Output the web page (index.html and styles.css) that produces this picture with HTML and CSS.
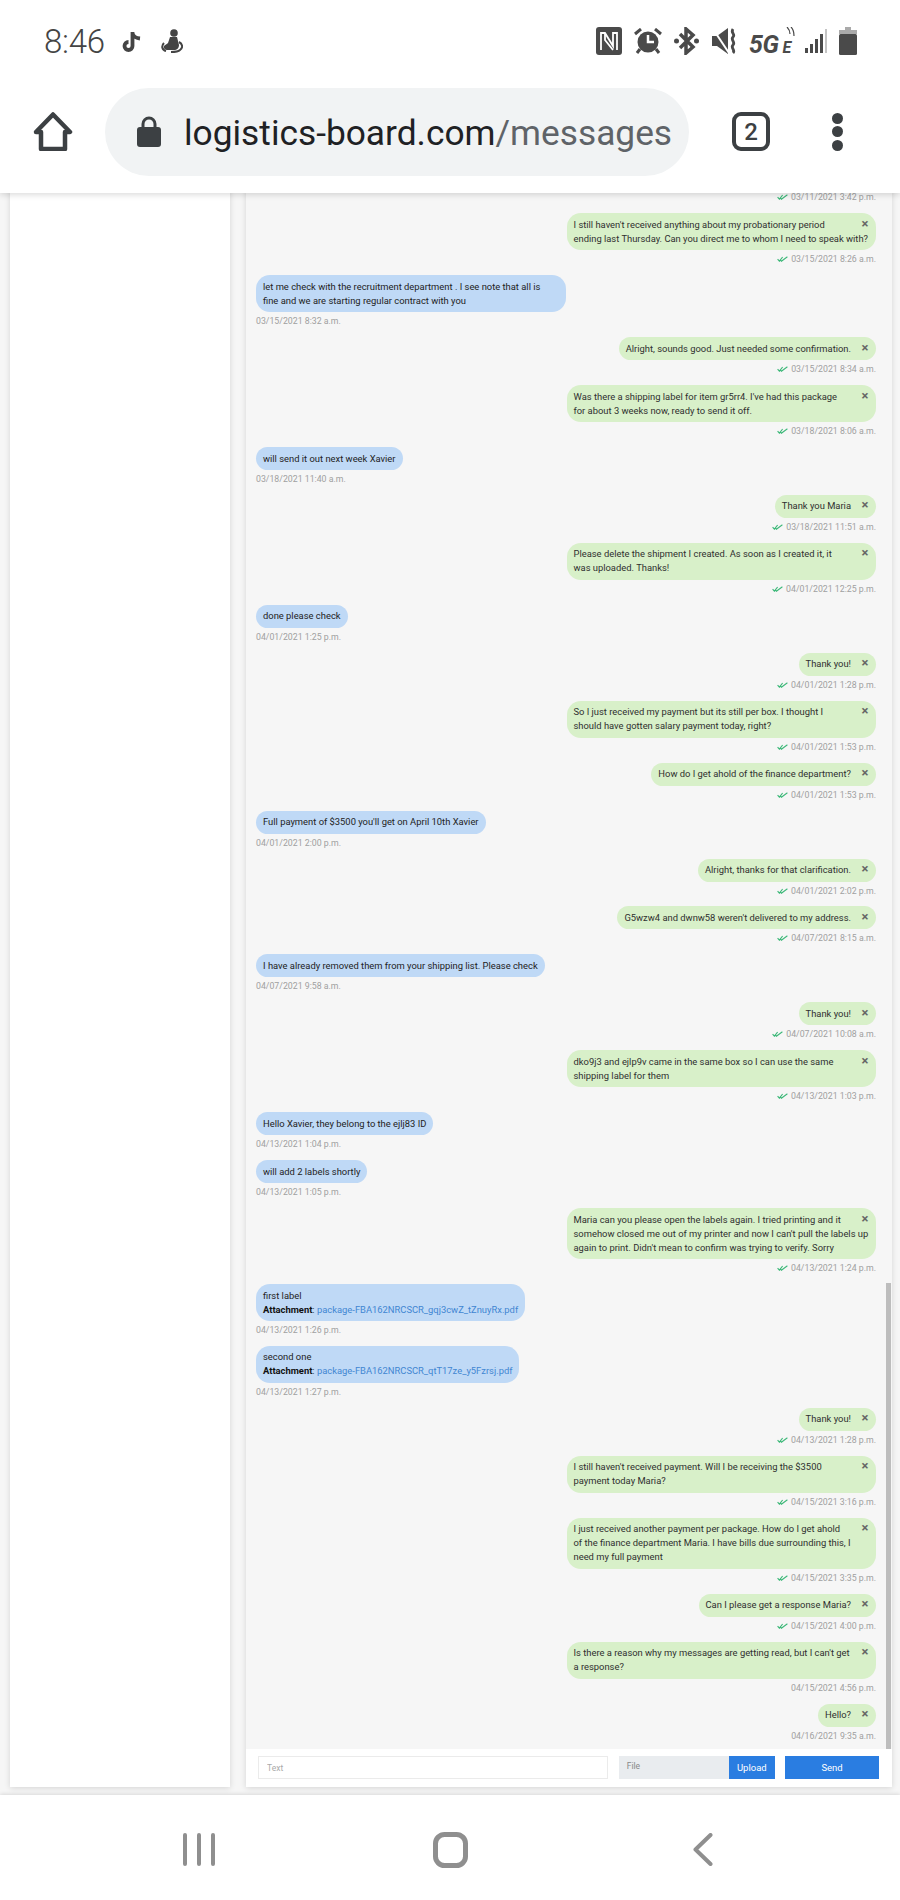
FILE: index.html
```html
<!DOCTYPE html>
<html lang="en">
<head>
<meta charset="utf-8">
<title>Messages</title>
<link rel="stylesheet" href="styles.css">
</head>
<body>
<svg class="defs" width="0" height="0"><defs>
<symbol id="chk" viewBox="0 0 11 6"><path d="M.6 3.2 2.4 5.2 5.6 1M3.6 4.4 4.4 5.2 10.4.8" fill="none" stroke="#3cb878" stroke-width="1.100"/></symbol>
</defs></svg>
<header class="top">
  <div class="status">
    <div class="status-left">
      <span class="clock">8:46</span>
      <svg class="ic-tt" viewBox="0 0 20 21"><path d="M10.500 1v14a4 4 0 1 1-4-4M10.500 2c.5 3 3 5 7.500 5.500" fill="none" stroke="#444" stroke-width="3.800"/></svg>
      <svg class="ic-fig" viewBox="0 0 22 24"><circle cx="13" cy="4" r="3.800" fill="#444"/><path d="M9 8h7l2 8c0 3-2 5-5 5H7c-3 0-5-2-4-4 1-1 3-2 4-3z" fill="#444"/><path d="M18 13c4 2 4 6 1 8-2 2-6 2-9 2M3 14C0 17 1 21 5 22" fill="none" stroke="#444" stroke-width="2"/></svg>
    </div>
    <div class="status-right">
      <svg class="ic-n" viewBox="0 0 26 28"><rect width="26" height="28" rx="3" fill="#4a4a4a"/><path d="M5 23V6h4l8 13V6h4v17M9 6v7l8 10" fill="none" stroke="#fff" stroke-width="1.800"/></svg>
      <svg class="ic-al" viewBox="0 0 28 26"><path d="M1 6 7 1M27 6 21 1" stroke="#4a4a4a" stroke-width="3"/><circle cx="14" cy="14" r="10.500" fill="#4a4a4a"/><path d="M14 7v7h6" fill="none" stroke="#fff" stroke-width="2.500"/><path d="M6 21l-3 4M22 21l3 4" stroke="#4a4a4a" stroke-width="3"/></svg>
      <svg class="ic-bt" viewBox="0 0 26 28"><path d="M6 7 19 20 12 26V2L19 8 6 21" fill="none" stroke="#4a4a4a" stroke-width="3.500"/><circle cx="2.500" cy="14" r="2.500" fill="#4a4a4a"/><circle cx="22.500" cy="14" r="2.500" fill="#4a4a4a"/></svg>
      <svg class="ic-mu" viewBox="0 0 25 26"><path d="M0 8h5l11-8v26L5 18H0z" fill="#4a4a4a"/><path d="M1 1 17 25" stroke="#fff" stroke-width="2"/><path d="M21 1c-3 4 3 5 0 8s3 5 0 8 3 5 0 8" fill="none" stroke="#4a4a4a" stroke-width="2.800"/></svg>
      <div class="net"><span class="net-5g">5G</span><span class="net-e">E</span>
        <svg class="ic-wave" viewBox="0 0 9 10"><path d="M1 0c2 2 3 4 3 7M5 0c2 2 3 5 3 9" fill="none" stroke="#4a4a4a" stroke-width="1.200"/></svg>
      </div>
      <svg class="ic-sig" viewBox="0 0 22 24"><rect x="0" y="19" width="3" height="5" fill="#4a4a4a"/><rect x="5" y="15" width="3" height="9" fill="#4a4a4a"/><rect x="10" y="10" width="3" height="14" fill="#4a4a4a"/><rect x="15" y="5" width="3" height="19" fill="#4a4a4a"/><rect x="20" y="0" width="2" height="24" fill="#c4c4c4"/></svg>
      <svg class="ic-bat" viewBox="0 0 18 28"><path d="M6 0h6v3h6v4H0V3h6z" fill="#aaa"/><rect y="7" width="18" height="21" rx="1.500" fill="#4a4a4a"/></svg>
    </div>
  </div>
  <div class="toolbar">
    <svg class="ic-home" viewBox="0 0 40 39"><path d="M20 2.500 37 20h-5v17H8V20H3z" fill="none" stroke="#3c4043" stroke-width="4.500" stroke-linejoin="round"/></svg>
    <div class="pill">
      <svg class="ic-lock" viewBox="0 0 24 31"><path d="M6 13V8a6 6 0 0 1 12 0v5" fill="none" stroke="#3c4043" stroke-width="3"/><rect y="11" width="24" height="20" rx="3" fill="#3c4043"/></svg>
      <div class="url"><span class="host">logistics-board.com</span><span class="path">/messages/</span></div>
    </div>
    <div class="tabs">2</div>
    <div class="dots"><i></i><i></i><i></i></div>
  </div>
</header>

<main class="main">
  <aside class="side"></aside>
  <section class="panel">
    <div class="list">
      <div class="msg out"><div class="ts"><svg class="chk"><use href="#chk"/></svg>03/11/2021 3:42 p.m.</div></div>

      <div class="msg out"><div class="bub multi"><span class="x">×</span>I still haven't received anything about my probationary period<br>ending last Thursday. Can you direct me to whom I need to speak with?</div><div class="ts"><svg class="chk"><use href="#chk"/></svg>03/15/2021 8:26 a.m.</div></div>
      <div class="msg in"><div class="bub multi">let me check with the recruitment department . I see note that all is<br>fine and we are starting regular contract with you</div><div class="ts">03/15/2021 8:32 a.m.</div></div>
      <div class="msg out"><div class="bub"><span class="x">×</span>Alright, sounds good. Just needed some confirmation.</div><div class="ts"><svg class="chk"><use href="#chk"/></svg>03/15/2021 8:34 a.m.</div></div>
      <div class="msg out"><div class="bub multi"><span class="x">×</span>Was there a shipping label for item gr5rr4. I've had this package<br>for about 3 weeks now, ready to send it off.</div><div class="ts"><svg class="chk"><use href="#chk"/></svg>03/18/2021 8:06 a.m.</div></div>
      <div class="msg in"><div class="bub">will send it out next week Xavier</div><div class="ts">03/18/2021 11:40 a.m.</div></div>
      <div class="msg out"><div class="bub"><span class="x">×</span>Thank you Maria</div><div class="ts"><svg class="chk"><use href="#chk"/></svg>03/18/2021 11:51 a.m.</div></div>
      <div class="msg out"><div class="bub multi"><span class="x">×</span>Please delete the shipment I created. As soon as I created it, it<br>was uploaded. Thanks!</div><div class="ts"><svg class="chk"><use href="#chk"/></svg>04/01/2021 12:25 p.m.</div></div>
      <div class="msg in"><div class="bub">done please check</div><div class="ts">04/01/2021 1:25 p.m.</div></div>
      <div class="msg out"><div class="bub"><span class="x">×</span>Thank you!</div><div class="ts"><svg class="chk"><use href="#chk"/></svg>04/01/2021 1:28 p.m.</div></div>
      <div class="msg out"><div class="bub multi"><span class="x">×</span>So I just received my payment but its still per box. I thought I<br>should have gotten salary payment today, right?</div><div class="ts"><svg class="chk"><use href="#chk"/></svg>04/01/2021 1:53 p.m.</div></div>
      <div class="msg out"><div class="bub"><span class="x">×</span>How do I get ahold of the finance department?</div><div class="ts"><svg class="chk"><use href="#chk"/></svg>04/01/2021 1:53 p.m.</div></div>
      <div class="msg in"><div class="bub">Full payment of $3500 you'll get on April 10th Xavier</div><div class="ts">04/01/2021 2:00 p.m.</div></div>
      <div class="msg out"><div class="bub"><span class="x">×</span>Alright, thanks for that clarification.</div><div class="ts"><svg class="chk"><use href="#chk"/></svg>04/01/2021 2:02 p.m.</div></div>
      <div class="msg out"><div class="bub"><span class="x">×</span>G5wzw4 and dwnw58 weren't delivered to my address.</div><div class="ts"><svg class="chk"><use href="#chk"/></svg>04/07/2021 8:15 a.m.</div></div>
      <div class="msg in"><div class="bub">I have already removed them from your shipping list. Please check</div><div class="ts">04/07/2021 9:58 a.m.</div></div>
      <div class="msg out"><div class="bub"><span class="x">×</span>Thank you!</div><div class="ts"><svg class="chk"><use href="#chk"/></svg>04/07/2021 10:08 a.m.</div></div>
      <div class="msg out"><div class="bub multi"><span class="x">×</span>dko9j3 and ejlp9v came in the same box so I can use the same<br>shipping label for them</div><div class="ts"><svg class="chk"><use href="#chk"/></svg>04/13/2021 1:03 p.m.</div></div>
      <div class="msg in"><div class="bub">Hello Xavier, they belong to the ejlj83 ID</div><div class="ts">04/13/2021 1:04 p.m.</div></div>
      <div class="msg in"><div class="bub">will add 2 labels shortly</div><div class="ts">04/13/2021 1:05 p.m.</div></div>
      <div class="msg out"><div class="bub multi"><span class="x">×</span>Maria can you please open the labels again. I tried printing and it<br>somehow closed me out of my printer and now I can't pull the labels up<br>again to print. Didn't mean to confirm was trying to verify. Sorry</div><div class="ts"><svg class="chk"><use href="#chk"/></svg>04/13/2021 1:24 p.m.</div></div>
      <div class="msg in"><div class="bub">first label<br><b>Attachment</b>: <a href="#">package-FBA162NRCSCR_gqj3cwZ_tZnuyRx.pdf</a></div><div class="ts">04/13/2021 1:26 p.m.</div></div>
      <div class="msg in"><div class="bub">second one<br><b>Attachment</b>: <a href="#">package-FBA162NRCSCR_qtT17ze_y5Fzrsj.pdf</a></div><div class="ts">04/13/2021 1:27 p.m.</div></div>
      <div class="msg out"><div class="bub"><span class="x">×</span>Thank you!</div><div class="ts"><svg class="chk"><use href="#chk"/></svg>04/13/2021 1:28 p.m.</div></div>
      <div class="msg out"><div class="bub multi"><span class="x">×</span>I still haven't received payment. Will I be receiving the $3500<br>payment today Maria?</div><div class="ts"><svg class="chk"><use href="#chk"/></svg>04/15/2021 3:16 p.m.</div></div>
      <div class="msg out"><div class="bub multi"><span class="x">×</span>I just received another payment per package. How do I get ahold<br>of the finance department Maria. I have bills due surrounding this, I<br>need my full payment</div><div class="ts"><svg class="chk"><use href="#chk"/></svg>04/15/2021 3:35 p.m.</div></div>
      <div class="msg out"><div class="bub"><span class="x">×</span>Can I please get a response Maria?</div><div class="ts"><svg class="chk"><use href="#chk"/></svg>04/15/2021 4:00 p.m.</div></div>
      <div class="msg out"><div class="bub multi"><span class="x">×</span>Is there a reason why my messages are getting read, but I can't get<br>a response?</div><div class="ts">04/15/2021 4:56 p.m.</div></div>
      <div class="msg out"><div class="bub"><span class="x">×</span>Hello?</div><div class="ts">04/16/2021 9:35 a.m.</div></div>
      <div class="scroll-thumb"></div>
    </div>
    <form class="composer">
      <input class="field" type="text" placeholder="Text">
      <div class="file"><span class="file-label">File</span><span class="file-btn">Upload</span></div>
      <button class="send" type="button">Send</button>
    </form>
  </section>
</main>

<footer class="nav">
  <svg class="nav-bars" viewBox="0 0 32 33"><path d="M2 2v29M16 2v29M30 2v29" stroke="#8f8f8f" stroke-width="4" stroke-linecap="round"/></svg>
  <svg class="nav-home" viewBox="0 0 35 36"><rect x="2.500" y="2.500" width="30" height="31" rx="9" fill="none" stroke="#8f8f8f" stroke-width="5"/></svg>
  <svg class="nav-back" viewBox="0 0 20 33"><path d="M17.500 2 2.500 16.500 17.500 31" fill="none" stroke="#8f8f8f" stroke-width="4" stroke-linecap="round" stroke-linejoin="round"/></svg>
</footer>
</body>
</html>
```

FILE: styles.css
```css
* { box-sizing: border-box; }
html, body { margin: 0; padding: 0; }
body {
  width: 900px;
  height: 1900px;
  display: flex;
  flex-direction: column;
  overflow: hidden;
  background: #f6f6f6;
  font-family: Roboto, "Liberation Sans", sans-serif;
  color: #333;
}
.defs { position: absolute; }

/* top chrome */
.top {
  position: relative;
  z-index: 2;
  height: 193px;
  flex: none;
  background: #fff;
  box-shadow: 0 2px 6px rgba(0,0,0,.14);
}
.status {
  height: 70px;
  padding: 12px 43px 0 44px;
  display: flex;
  align-items: center;
  justify-content: space-between;
}
.status-left, .status-right { display: flex; align-items: center; }
.status-left svg, .status-right svg { display: block; flex: none; }
.clock { font-size: 33px; font-weight: 300; color: #444; width: 61px; letter-spacing: -.3px; }
.ic-tt { width: 20px; height: 21px; margin-left: 17px; }
.ic-fig { width: 22px; height: 24px; margin-left: 19px; }
.status-right { gap: 12px; }
.ic-n { width: 26px; height: 28px; }
.ic-al { width: 28px; height: 26px; }
.ic-bt { width: 26px; height: 28px; }
.ic-mu { width: 25px; height: 26px; }
.net { position: relative; width: 48px; height: 28px; display: flex; align-items: flex-end; font-style: italic; font-weight: 700; color: #4a4a4a; }
.net-5g { font-size: 25px; line-height: 20px; letter-spacing: -.5px; }
.net-e { font-size: 16px; line-height: 14px; margin-left: 4px; }
.ic-wave { position: absolute; right: 2px; top: 0; width: 9px; height: 10px; }
.ic-sig { width: 22px; height: 24px; margin-left: -4px; }
.ic-bat { width: 18px; height: 28px; }

.toolbar { height: 123px; display: flex; align-items: center; padding-left: 33px; }
.ic-home { width: 40px; height: 39px; flex: none; }
.pill {
  width: 584px;
  height: 88px;
  margin-left: 32px;
  padding: 0 17px 0 32px;
  border-radius: 44px;
  background: #f1f3f4;
  display: flex;
  align-items: center;
  gap: 23px;
}
.ic-lock { width: 24px; height: 31px; flex: none; }
.url { flex: 1; overflow: hidden; white-space: nowrap; font-size: 35.300px; line-height: 46px; padding-top: 2px; }
.host { color: #202124; }
.path { color: #5f6368; }
.tabs {
  width: 38px;
  height: 39px;
  margin-left: 43px;
  border: 4px solid #3c4043;
  border-radius: 9px;
  display: flex;
  align-items: center;
  justify-content: center;
  font-size: 24px;
  font-weight: 500;
  color: #3c4043;
}
.dots { margin-left: 62px; display: flex; flex-direction: column; gap: 2.500px; }
.dots i { width: 11px; height: 11px; border-radius: 50%; background: #3c4043; }

/* page */
.main {
  flex: 1;
  min-height: 0;
  margin-top: -4.700px;
  padding: 0 8px 8px 10px;
  display: flex;
  gap: 16px;
}
.side { width: 220px; background: #fff; box-shadow: 0 1px 6px rgba(0,0,0,.14); }
.panel { flex: 1; min-width: 0; display: flex; flex-direction: column; box-shadow: 0 1px 6px rgba(0,0,0,.14); background: #f6f6f6; }
.list { position: relative; flex: 1; min-height: 0; overflow: hidden; padding: 0 16px 0 10px; }
.msg { display: flex; flex-direction: column; }
.msg.out { align-items: flex-end; }
.msg.in { align-items: flex-start; }
.bub {
  max-width: 309.500px;
  padding: 4.500px 7px;
  border-radius: 14px;
  font-size: 9.400px;
  line-height: 14px;
  color: #2f2f2f;
}
.bub.multi { width: 309.500px; white-space: nowrap; }
.out .bub { background: #d8f0c9; }
.in .bub { background: #bfd9f6; color: #222; white-space: nowrap; }
.in .bub b { color: #111; font-weight: 700; }
.in .bub a { color: #3f86d2; text-decoration: none; }
.x { float: right; margin-left: 10px; width: 8px; text-align: center; font-size: 13px; line-height: 12px; font-weight: 700; color: #666; }
.ts {
  display: flex;
  align-items: center;
  gap: 3.500px;
  margin: 3px 0 9.940px;
  height: 12px;
  font-size: 8.750px;
  line-height: 12px;
  color: #a0a0a0;
}
.chk { width: 11px; height: 6px; }
.scroll-thumb { position: absolute; right: 1px; top: 1095px; bottom: 0; width: 5px; background: #bdbdbd; }

/* composer */
.composer { flex: none; height: 38px; padding: 7px 13px 8px 12px; background: #fff; display: flex; gap: 10.500px; }
.field {
  width: 350.500px;
  height: 23px;
  padding: 0 8px;
  border: 1px solid #ebebeb;
  background: #fff;
  font: 8.500px Roboto, sans-serif;
}
.field::placeholder { color: #aaa; }
.file { width: 156px; height: 23px; display: flex; background: #e9ecef; }
.file-label { flex: 1; padding: 4px 8px; font-size: 8.500px; line-height: 12px; color: #888; }
.file-btn { width: 45.500px; background: #2a7de1; color: #fff; font-size: 9.500px; line-height: 23px; text-align: center; }
.send { width: 94px; height: 23px; padding: 0; border: 0; background: #2a7de1; color: #fff; font: 9.500px Roboto, sans-serif; }

/* bottom nav */
.nav {
  position: relative;
  z-index: 2;
  flex: none;
  height: 105px;
  background: #fff;
  box-shadow: 0 -1px 4px rgba(0,0,0,.12);
  display: flex;
  align-items: flex-start;
  padding: 37px 0 0 183px;
}
.nav-bars { width: 32px; height: 33px; margin-top: 1px; }
.nav-home { width: 35px; height: 36px; margin-left: 218px; }
.nav-back { width: 20px; height: 33px; margin-left: 225px; margin-top: 1px; }
```
